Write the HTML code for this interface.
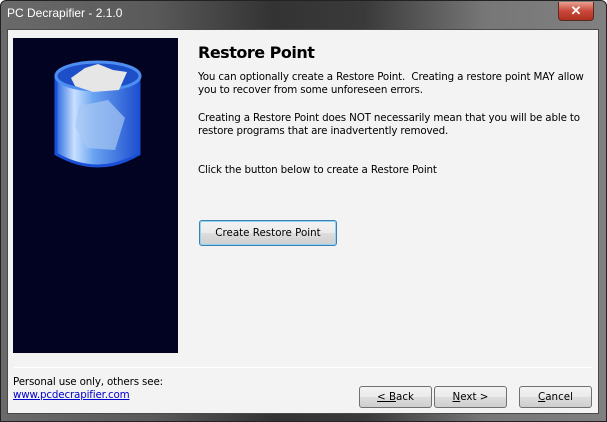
<!DOCTYPE html>
<html><head><style>
*{margin:0;padding:0;box-sizing:border-box}
body{width:607px;height:422px;overflow:hidden;background:#fff;font-family:Tahoma,"DejaVu Sans","Liberation Sans",sans-serif;font-size:11px;color:#000;position:relative}
.win{position:absolute;left:0;top:0;width:607px;height:422px;border:1px solid #222;border-radius:6px 6px 0 0;background:linear-gradient(90deg,#6a6a6a 0%,#5a5a5a 25%,#333 45%,#3a3a3a 60%,#777 80%,#808080 100%)}
.title{position:absolute;left:6px;top:5px;color:#fff;font-family:"Liberation Sans",sans-serif;font-size:12px}
.close{position:absolute;left:557px;top:1px;width:36px;height:19px;border:1px solid #5a2a22;border-top:none;border-radius:0 0 4px 4px;background:linear-gradient(#e8a08f,#c9483a 50%,#b0301f);color:#fff;font:bold 13px "Liberation Sans",sans-serif;text-align:center;line-height:17px}
.client{position:absolute;left:7px;top:29px;width:592px;height:385px;background:#f3f3f3;border:1px solid #4a4a4a}
.panel{position:absolute;left:13px;top:38px;width:165px;height:315px;background:#000008;background-image:radial-gradient(#0a0a66 0.6px,transparent 0.8px);background-size:2px 2px}
h1{position:absolute;left:198px;top:43px;font:bold 16px "DejaVu Sans",sans-serif;letter-spacing:-0.5px}
.t{position:absolute;left:198px;line-height:13px;font-family:"DejaVu Sans",sans-serif;font-size:10.3px;letter-spacing:-0.15px;white-space:nowrap}
.btn{position:absolute;height:22px;border:1px solid #707070;border-radius:3px;background:linear-gradient(#f2f2f2 0%,#ebebeb 50%,#dddddd 51%,#cfcfcf 100%);font-family:"DejaVu Sans",sans-serif;font-size:10.3px;text-align:center;line-height:20px}
.sep{position:absolute;left:14px;top:367px;width:578px;height:1px;background:#a0a0a0;border-bottom:1px solid #fff}
a{color:#00c;text-decoration:underline}
</style></head><body>
<div class="win">
<div class="title">PC Decrapifier - 2.1.0</div>
<div class="close">✕</div>
</div>
<div class="client"></div>
<div class="panel">
<svg width="165" height="140" viewBox="0 0 165 140" style="position:absolute;left:0;top:0">
<defs><linearGradient id="g" x1="0" x2="1"><stop offset="0" stop-color="#2a6ae0"/><stop offset=".22" stop-color="#c8e0ff"/><stop offset=".45" stop-color="#6aa4f0"/><stop offset="1" stop-color="#1f4fd0"/></linearGradient></defs>
<path d="M43 38 L43 116 Q85 140 126 116 L126 38 Z" fill="url(#g)" stroke="#1a50d8" stroke-width="3"/>
<ellipse cx="85" cy="38" rx="42" ry="14" fill="#1d4fc8" stroke="#4d8ef0" stroke-width="3"/>
<path d="M58 40 L72 30 L85 26 L100 32 L114 34 L106 52 L80 54 L62 48 Z" fill="#e6e6e6"/>
<path d="M66 68 L95 62 L112 80 L102 112 L74 110 L62 88 Z" fill="#a8c8f2" opacity=".7"/>
</svg>
</div>
<h1>Restore Point</h1>
<div class="t" style="top:71px">You can optionally create a Restore Point.&nbsp; Creating a restore point MAY allow<br>you to recover from some unforeseen errors.</div>
<div class="t" style="top:112px">Creating a Restore Point does NOT necessarily mean that you will be able to<br>restore programs that are inadvertently removed.</div>
<div class="t" style="top:164px">Click the button below to create a Restore Point</div>
<div class="btn" style="left:199px;top:220px;width:138px;height:26px;line-height:24px;border:1px solid #3c7fb1;box-shadow:inset 0 0 0 1px #8fd3f5">Create Restore Point</div>
<div class="sep"></div>
<div class="t" style="left:13px;top:376px">Personal use only, others see:<br><a>www.pcdecrapifier.com</a></div>
<div class="btn" style="left:359px;top:386px;width:73px"><u>&lt; B</u>ack</div>
<div class="btn" style="left:434px;top:386px;width:73px"><u>N</u>ext &gt;</div>
<div class="btn" style="left:519px;top:386px;width:73px"><u>C</u>ancel</div>
</body></html>
